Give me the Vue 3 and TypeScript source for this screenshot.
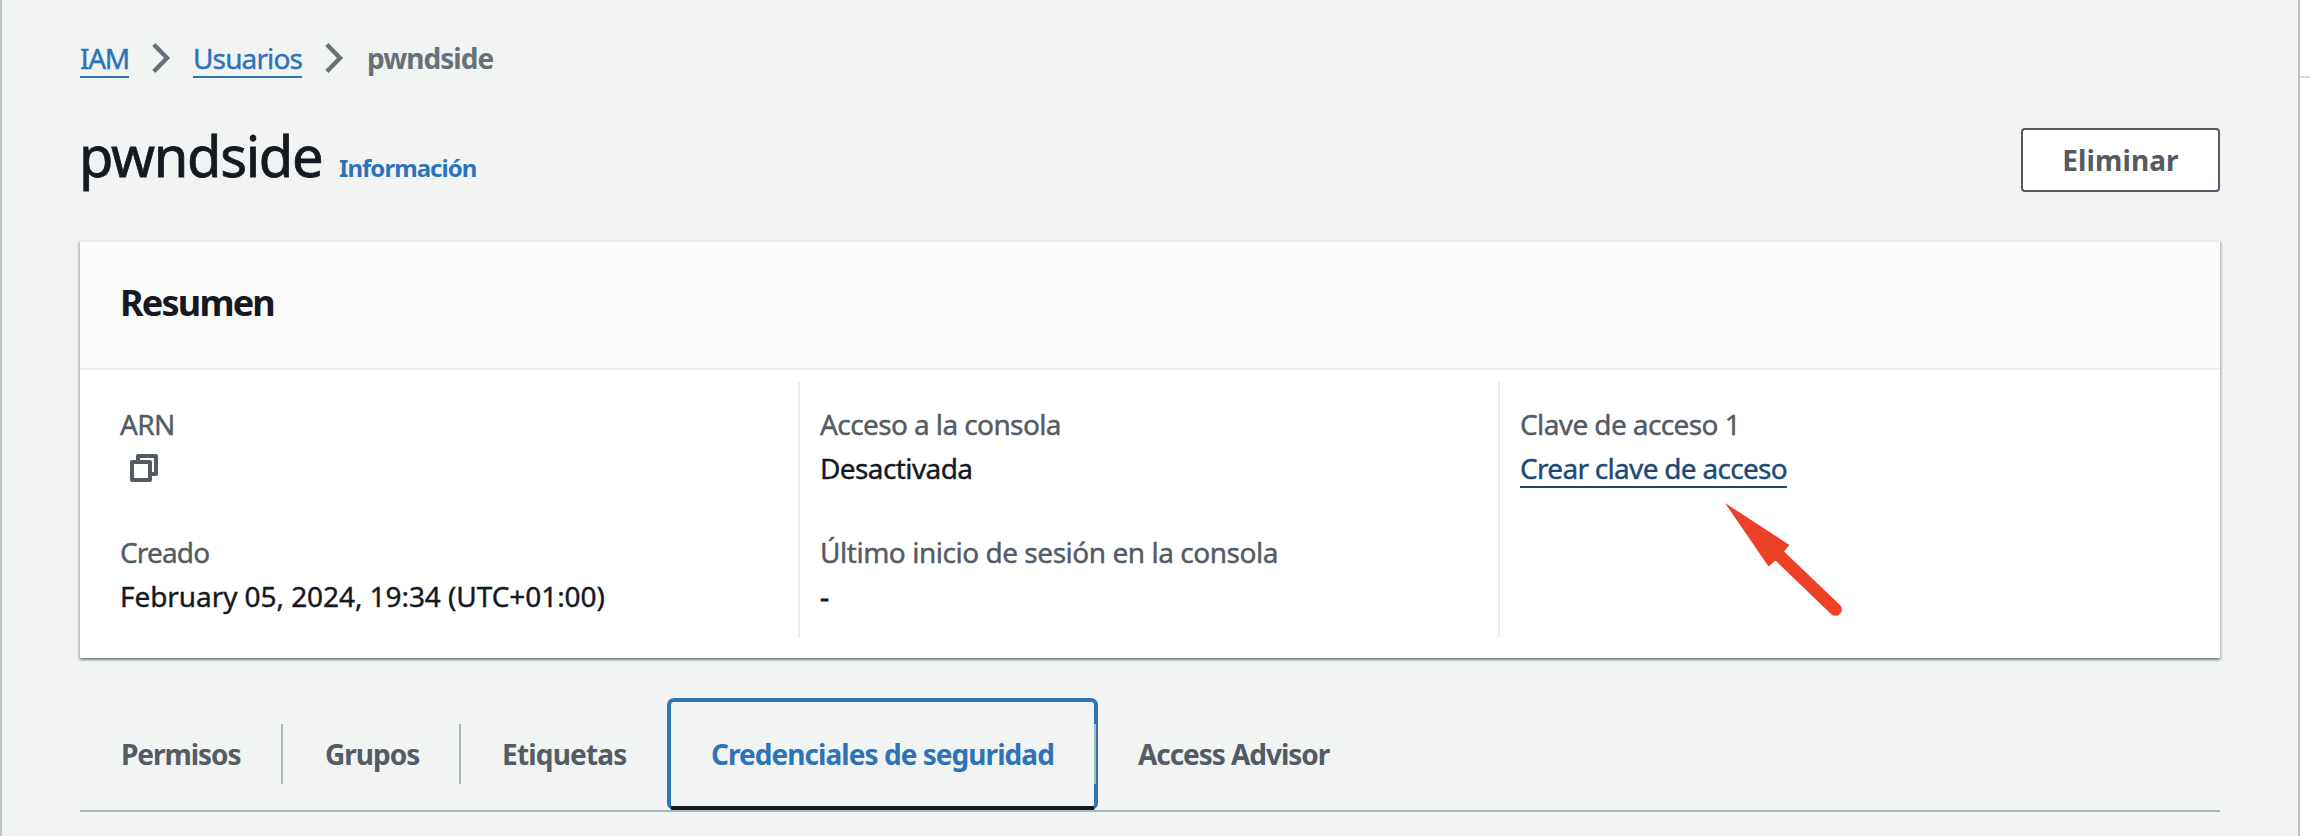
<script setup lang="ts">
interface Tab {
  id: string
  label: string
}

const tabs: Tab[] = [
  { id: 'permisos', label: 'Permisos' },
  { id: 'grupos', label: 'Grupos' },
  { id: 'etiquetas', label: 'Etiquetas' },
  { id: 'credenciales', label: 'Credenciales de seguridad' },
  { id: 'advisor', label: 'Access Advisor' },
]
const activeTab = 'credenciales'
</script>

<template>
  <div class="screen">
    <main class="page">
      <nav class="crumbs">
        <a class="link iam">IAM</a>
        <svg class="chevron" viewBox="0 0 20 32"><path d="M2.800 2.500 16 16 2.800 29.500" /></svg>
        <a class="link users">Usuarios</a>
        <svg class="chevron" viewBox="0 0 20 32"><path d="M2.800 2.500 16 16 2.800 29.500" /></svg>
        <span class="current">pwndside</span>
      </nav>

      <header class="heading">
        <h1>pwndside</h1>
        <a class="info">Información</a>
        <button class="delete" type="button">Eliminar</button>
      </header>

      <section class="card">
        <div class="card-head"><h2>Resumen</h2></div>
        <div class="columns">
          <div class="column">
            <div class="field">
              <div class="label arn">ARN</div>
              <div class="value">
                <svg class="copy" viewBox="0 0 30 30">
                  <path d="M10 9V3H28V21H22" />
                  <path d="M4 9H22V27H4Z" />
                </svg>
              </div>
            </div>
            <div class="field">
              <div class="label created">Creado</div>
              <div class="value date">February 05, 2024, 19:34 (UTC+01:00)</div>
            </div>
          </div>
          <div class="column">
            <div class="field">
              <div class="label access">Acceso a la consola</div>
              <div class="value state">Desactivada</div>
            </div>
            <div class="field">
              <div class="label login">Último inicio de sesión en la consola</div>
              <div class="value dash">-</div>
            </div>
          </div>
          <div class="column">
            <div class="field">
              <div class="label key">Clave de acceso 1</div>
              <div class="value"><a class="link create">Crear clave de acceso</a></div>
            </div>
            <svg class="arrow" viewBox="0 0 120 116">
              <path d="M0 0 64.500 42 59 48.500 115 102a6 6 0 0 1-9 9L50.500 57.500 43.500 63.500Z" />
            </svg>
          </div>
        </div>
      </section>

      <nav class="tabs">
        <a v-for="tab in tabs" :key="tab.id" :class="['tab', tab.id, { active: tab.id === activeTab }]">{{ tab.label }}</a>
      </nav>
    </main>
    <aside class="side"><div class="side-line"></div></aside>
  </div>
</template>

<style>
body {
  margin: 0;
  overflow: hidden;
}
</style>

<style scoped>
* {
  box-sizing: border-box;
}
.screen {
  display: flex;
  width: 2310px;
  height: 836px;
  overflow: hidden;
  background: #f2f3f3;
  font: 400 28px/44px "Noto Sans", "Open Sans", sans-serif;
  color: #16191f;
  white-space: nowrap;
}
.page {
  width: 2300px;
  padding: 36px 78px 0 78px;
  border-left: 2px solid #bdc3c7;
  border-right: 2px solid #bbc1c4;
}
.side {
  width: 10px;
  padding-top: 76px;
  background: #fff;
}
.side-line {
  height: 2px;
  background: #d5dbdb;
}
.crumbs {
  display: flex;
  height: 44px;
}
.link {
  height: 42px;
  color: #2e73b8;
  border-bottom: 2px solid currentColor;
}
.link,
.label,
.value {
  -webkit-text-stroke: 0.4px currentColor;
}
.iam {
  width: 49px;
  letter-spacing: -1.27px;
}
.users {
  width: 109px;
  letter-spacing: -0.87px;
}
.chevron {
  width: 20px;
  height: 32px;
  margin: 6px 22px 0 22px;
  overflow: visible;
  fill: none;
  stroke: #687078;
  stroke-width: 4.4;
}
.current {
  margin-left: 1px;
  font-weight: 700;
  color: #687078;
  letter-spacing: -0.95px;
}
.heading {
  display: flex;
  align-items: baseline;
  height: 160px;
  padding-top: 41px;
}
h1 {
  width: 240px;
  margin: 0;
  font-size: 56px;
  font-weight: 400;
  line-height: 68px;
  letter-spacing: -1.3px;
  text-indent: -1px;
  -webkit-text-stroke: 0.8px currentColor;
}
.info {
  margin-left: 18px;
  font-size: 24px;
  font-weight: 700;
  color: #2e73b8;
  letter-spacing: -0.95px;
  text-indent: 1px;
}
.delete {
  align-self: flex-start;
  width: 199px;
  height: 64px;
  margin: 7px 0 0 auto;
  padding: 0;
  border: 2px solid #545b64;
  border-radius: 4px;
  background: #fff;
  color: #545b64;
  font: 700 28px/60px "Noto Sans", "Open Sans", sans-serif;
  letter-spacing: 0.1px;
}
.card {
  height: 418px;
  background: #fff;
  border-top: 2px solid #eaeded;
  box-shadow: 0 2px 2px rgba(0, 28, 36, 0.3), 2px 2px 2px rgba(0, 28, 36, 0.15),
    -2px 2px 2px rgba(0, 28, 36, 0.15);
}
.card-head {
  height: 128px;
  padding: 39px 40px 0;
  background: #fafafa;
  border-bottom: 2px solid #eaeded;
}
h2 {
  margin: 0;
  font-size: 36px;
  font-weight: 700;
  line-height: 44px;
  letter-spacing: -1.8px;
}
.columns {
  display: grid;
  grid-template-columns: 718px 700px 722px;
  padding-top: 12px;
}
.column {
  position: relative;
  display: flex;
  flex-direction: column;
  gap: 40px;
  height: 256px;
  padding: 20px 0 20px 20px;
  border-left: 2px solid #eaeded;
}
.column:first-child {
  padding-left: 40px;
  border-left: 0;
}
.field {
  height: 88px;
}
.label {
  color: #545b64;
}
.label,
.value {
  height: 44px;
}
.arn { letter-spacing: -0.7px; }
.created { letter-spacing: -0.85px; }
.date { letter-spacing: -0.07px; }
.access { letter-spacing: -0.6px; }
.state { letter-spacing: -0.6px; }
.login { letter-spacing: -0.47px; }
.key { letter-spacing: -0.6px; }
.dash { -webkit-text-stroke-width: 0.8px; }
.create {
  display: block;
  width: 267px;
  color: #1d4a75;
  letter-spacing: -0.7px;
}
.copy {
  display: block;
  width: 30px;
  height: 30px;
  margin-left: 8px;
  transform: translateY(7px);
  fill: none;
  stroke: #545b64;
  stroke-width: 4;
  stroke-linejoin: round;
}
.arrow {
  position: absolute;
  left: 225px;
  top: 121px;
  width: 120px;
  height: 116px;
  fill: #ec4027;
}
.tabs {
  display: flex;
  height: 114px;
  margin-top: 40px;
  border-bottom: 2px solid #aab7b8;
}
.tab {
  position: relative;
  height: 112px;
  padding-left: 41px;
  font-weight: 700;
  line-height: 112px;
  color: #545b64;
}
.permisos {
  width: 203px;
  letter-spacing: -1.05px;
}
.grupos {
  width: 178px;
  padding-left: 42px;
  letter-spacing: -1px;
}
.etiquetas {
  width: 206px;
  letter-spacing: -0.8px;
}
.credenciales {
  width: 431px;
  padding-left: 40px;
  letter-spacing: -0.95px;
}
.advisor {
  padding-left: 40px;
  letter-spacing: -1.05px;
}
.permisos::after,
.grupos::after,
.credenciales::after {
  content: "";
  position: absolute;
  right: 0;
  top: 26px;
  width: 2px;
  height: 60px;
  background: #aab7b8;
}
.tab.active {
  border: 4px solid #2e73b8;
  border-bottom: 0;
  border-radius: 7px;
  line-height: 105px;
  color: #2e73b8;
}
.tab.active::after {
  right: -2px;
  top: 22px;
}
.tab.active::before {
  content: "";
  position: absolute;
  left: 0;
  right: 0;
  bottom: 0;
  height: 4px;
  background: #16191f;
}
</style>
